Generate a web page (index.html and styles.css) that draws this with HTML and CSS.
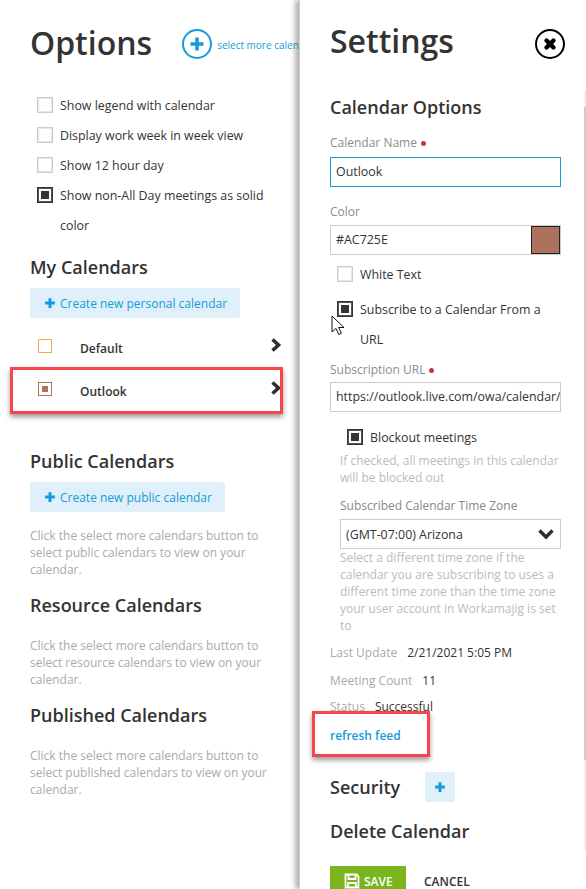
FILE: index.html
```html
<!DOCTYPE html>
<html lang="en">
<head>
<meta charset="utf-8">
<title>Options and Settings</title>
<link rel="stylesheet" href="styles.css">
</head>
<body>
<div class="page">
  <section class="options">
    <header class="opt-head">
      <h1>Options</h1>
      <span class="circle-add"><svg viewBox="0 0 16 16" class="plus"><path d="M6.2 1.5h3.6v4.7h4.7v3.6H9.8v4.7H6.2V9.8H1.5V6.2h4.7z"/></svg></span>
      <a class="more">select more calendars</a>
    </header>
    <div class="check-list">
      <label class="check"><i class="box"></i><span>Show legend with calendar</span></label>
      <label class="check"><i class="box"></i><span>Display work week in week view</span></label>
      <label class="check"><i class="box"></i><span>Show 12 hour day</span></label>
      <label class="check"><i class="box on"></i><span>Show non-All Day meetings as solid color</span></label>
    </div>
    <h2 class="my">My Calendars</h2>
    <a class="add-btn"><svg viewBox="0 0 16 16" class="plus small"><path d="M6 1.5h4v4.5h4.500v4H10v4.500H6V10H1.500V6H6z"/></svg>Create new personal calendar</a>
    <div class="cal-row first">
      <i class="swatch orange"></i><b>Default</b>
      <svg class="chev" viewBox="0 0 12 14"><path d="M2.500 1.500l6 5.500-6 5.500" /></svg>
    </div>
    <div class="cal-row second">
      <i class="swatch brown"></i><b>Outlook</b>
      <svg class="chev" viewBox="0 0 12 14"><path d="M2.500 1.500l6 5.500-6 5.500" /></svg>
      <span class="mark mark-outlook"></span>
    </div>
    <h2 class="public">Public Calendars</h2>
    <a class="add-btn"><svg viewBox="0 0 16 16" class="plus small"><path d="M6 1.5h4v4.5h4.500v4H10v4.500H6V10H1.500V6H6z"/></svg>Create new public calendar</a>
    <p class="hint first-hint">Click the select more calendars button to select public calendars to view on your calendar.</p>
    <h2 class="resource">Resource Calendars</h2>
    <p class="hint res-hint">Click the select more calendars button to select resource calendars to view on your calendar.</p>
    <h2 class="published">Published Calendars</h2>
    <p class="hint res-hint">Click the select more calendars button to select published calendars to view on your calendar.</p>
  </section>

  <section class="settings">
    <header class="set-head">
      <h1>Settings</h1>
      <span class="close"><svg viewBox="0 0 16 16"><path d="M4.500 4.500l7 7M11.500 4.500l-7 7"/></svg></span>
    </header>
    <div class="scroll-track"><div class="scroll-thumb"></div></div>
    <h2 class="cal-opts">Calendar Options</h2>
    <div class="label name-label">Calendar Name<em></em></div>
    <div class="field focus">Outlook</div>
    <div class="label color-label">Color</div>
    <div class="field color">#AC725E<i class="chip"></i></div>
    <label class="check white"><i class="box"></i><span>White Text</span></label>
    <label class="check sub"><i class="box on"></i><span>Subscribe to a Calendar From a URL</span></label>
    <div class="label url-label">Subscription URL<em></em></div>
    <div class="field url">https://outlook.live.com/owa/calendar/00000000</div>
    <div class="nested">
      <label class="check block"><i class="box on"></i><span>Blockout meetings</span></label>
      <p class="note">If checked, all meetings in this calendar will be blocked out</p>
      <div class="label tz-label">Subscribed Calendar Time Zone</div>
      <div class="field select">(GMT-07:00) Arizona<svg class="down" viewBox="0 0 18 12"><path d="M2.500 2.500L9 9l6.500-6.500"/></svg></div>
      <p class="note">Select a different time zone if the calendar you are subscribing to uses a different time zone than the time zone your user account in Workamajig is set to</p>
    </div>
    <div class="info first-info"><span>Last Update</span>2/21/2021 5:05 PM</div>
    <div class="info count-info"><span>Meeting Count</span>11</div>
    <div class="info status-info"><span>Status</span>Successful</div>
    <div class="refresh-wrap"><a class="refresh">refresh feed</a><span class="mark mark-refresh"></span></div>
    <div class="security"><h2>Security</h2><span class="sq-add"><svg viewBox="0 0 16 16" class="plus small"><path d="M6 1.5h4v4.5h4.500v4H10v4.500H6V10H1.500V6H6z"/></svg></span></div>
    <h2 class="delete">Delete Calendar</h2>
    <div class="actions">
      <a class="save"><svg viewBox="0 0 16 16"><path d="M1.500 1.500h11l2 2v11h-13z M4.500 2v4h7V2 M4 14.500V10h8v4.500"/></svg>SAVE</a>
      <a class="cancel">CANCEL</a>
    </div>
    <svg class="cursor" viewBox="0 0 14 22"><path d="M1 1v16l4-3.500 2.800 6 2.600-1.200-2.800-5.800H13z"/></svg>
  </section>
</div>
</body>
</html>
```

FILE: styles.css
```css
* { box-sizing: border-box; }
html, body { margin: 0; padding: 0; height: 100%; overflow: hidden; background: #fff; }
body { font-family: "Open Sans", "Liberation Sans", sans-serif; font-size: 12.400px; color: #333; }
.page { display: flex; width: 586px; height: 889px; overflow: hidden; }
h1, h2, p { margin: 0; }
h1 { font-size: 32px; font-weight: 600; line-height: 46px; color: #333; }
h2 { font-size: 18px; font-weight: 600; line-height: 24px; color: #333; }

.options { width: 299px; flex: none; padding: 21px 0 0 30px; overflow: hidden; white-space: normal; }
.opt-head { display: flex; align-items: center; width: 330px; white-space: nowrap; }
.opt-head h1 { margin: -1px 0 1px; }
.circle-add { width: 30px; height: 30px; margin-left: 30px; border: 2px solid #169bd9; border-radius: 50%; display: flex; align-items: center; justify-content: center; }
.plus { width: 16px; height: 16px; fill: #169bd9; }
.plus.small { width: 12px; height: 12px; }
.more { font-size: 10px; color: #169bd9; margin-left: 5px; position: relative; top: 1px; }

.check-list { margin-top: 23px; padding-left: 7px; width: 245px; }
.check { display: flex; align-items: flex-start; line-height: 30px; font-size: 12.400px; color: #333; }
.check span { padding-top: 1px; margin-bottom: -1px; }
.box { flex: none; width: 16px; height: 16px; margin-top: 7px; margin-right: 7px; border: 1px solid #ccc; background: #fff; box-shadow: inset 0 0 0 1px #e4e8ee; position: relative; display: block; }
.box.on { border: 1px solid #333; box-shadow: inset 0 0 0 1px #555; }
.box.on::after { content: ""; position: absolute; left: 3px; top: 3px; width: 8px; height: 8px; background: #333; }

.my { margin-top: 15px; }
.add-btn { display: inline-flex; align-items: center; gap: 4px; height: 30px; padding: 0 13px 0 14px; margin-top: 9px; background: #dff0fa; border-radius: 2px; color: #169bd9; font-size: 12px; white-space: nowrap; }
.cal-row { display: flex; align-items: center; height: 43px; width: 252px; position: relative; }
.cal-row.first { margin-top: 8px; }
.cal-row b { font-weight: 600; font-size: 12px; margin-left: 28px; position: relative; top: 1px; }
.swatch { width: 14px; height: 14px; margin-left: 8px; margin-top: -3px; display: block; background: #fff; }
.swatch.orange { border: 1px solid #f5a84d; }
.swatch.brown { border: 1px solid #ac725e; box-shadow: inset 0 0 0 3px #fff; background: #ac725e; }
.chev { width: 12px; height: 14px; margin-left: auto; margin-top: -6px; fill: none; stroke: #2d2d33; stroke-width: 3.600; }
.mark { position: absolute; border: 3px solid #f7464a; box-shadow: 0 3px 5px rgba(0,0,0,.4); pointer-events: none; }
.mark-outlook { left: -20px; top: -2px; width: 273px; height: 47px; }

.public { margin-top: 37px; }
.hint { font-size: 12px; line-height: 17px; color: #aaa; width: 240px; }
.first-hint { margin-top: 15px; }
.resource { margin-top: 15px; }
.res-hint { margin-top: 20px; }
.published { margin-top: 15px; }

.settings { flex: 1; position: relative; padding: 18px 0 0 30px; background: #fff; box-shadow: -4px 0 5px rgba(0,0,0,.3); border-left: 1px solid #ccc; overflow: hidden; }
.set-head { display: flex; align-items: center; justify-content: space-between; padding-right: 21px; }
.close { width: 30px; height: 30px; border: 2px solid #000; border-radius: 50%; display: flex; align-items: center; justify-content: center; margin-top: 5px; }
.close svg { width: 16px; height: 16px; fill: none; stroke: #000; stroke-width: 4.400; stroke-linecap: round; }
.scroll-track { position: absolute; right: 0; top: 90px; width: 2px; height: 760px; background: #f0f0f0; padding-top: 17px; }
.scroll-thumb { height: 653px; background: #ccc; }
.cal-opts { margin-top: 31px; }
.label { font-size: 12px; line-height: 18px; color: #8d8d8d; margin-top: 9px; }
.label.name-label { margin-top: 15px; }
.label em { display: inline-block; width: 5px; height: 5px; margin-left: 4px; border-radius: 50%; background: #c0393b; vertical-align: 1px; }
.field { width: 231px; height: 30px; border: 1px solid #ccc; margin-top: 4px; padding: 0 5px; line-height: 28px; font-size: 12.400px; color: #333; white-space: nowrap; overflow: hidden; position: relative; }
.field.focus { border-color: #169bd9; margin-top: 5px; }
.label.color-label { margin-top: 16px; }
.field.color { padding-right: 0; display: flex; justify-content: space-between; }
.chip { width: 29px; height: 28px; background: #ac725e; border: 1px solid #222; display: block; }
.check.white { padding-left: 7px; margin-top: 4px; width: 231px; }
.check.sub { padding-left: 7px; margin-top: 5px; width: 231px; }
.label.url-label { margin-top: 7px; }
.field.url { margin-top: 3px; }
.nested { padding-left: 10px; width: 231px; }
.check.block { padding-left: 7px; margin-top: 10px; }
.note { font-size: 12px; line-height: 17px; color: #bbb; }
.label.tz-label { margin-top: 11px; color: #888; }
.field.select { width: 221px; margin-top: 4px; line-height: 30px; }
.down { position: absolute; right: 5px; top: 8px; width: 18px; height: 12px; fill: none; stroke: #2d2d33; stroke-width: 3.400; }
.info { font-size: 12px; line-height: 18px; color: #333; white-space: nowrap; }
.first-info { margin-top: 10px; }
.count-info { margin-top: 10px; }
.status-info { margin-top: 8px; }
.info span { color: #aaa; margin-right: 10px; }
.refresh-wrap { position: relative; margin-top: 11px; line-height: 18px; }
.refresh { color: #169bd9; font-weight: 600; font-size: 12px; }
.mark-refresh { left: -18px; top: -16px; width: 118px; height: 46px; }
.security { display: flex; align-items: center; gap: 25px; margin-top: 27px; }
.sq-add { width: 30px; height: 30px; background: #dff0fa; border-radius: 2px; display: flex; align-items: center; justify-content: center; }
.delete { margin-top: 17px; }
.actions { display: flex; align-items: center; margin-top: 23px; }
.save { display: flex; align-items: center; gap: 4px; width: 76px; height: 30px; background: #7ab51d; color: #fff; font-weight: 600; font-size: 12px; padding-left: 14px; }
.save svg { width: 16px; height: 16px; fill: none; stroke: #fff; stroke-width: 1.800; }
.cancel { margin-left: 18px; font-size: 12px; font-weight: 600; color: #333; }
.cursor { position: absolute; left: 31px; top: 315px; width: 14px; height: 22px; fill: #fff; stroke: #111; stroke-width: 1; }
```
